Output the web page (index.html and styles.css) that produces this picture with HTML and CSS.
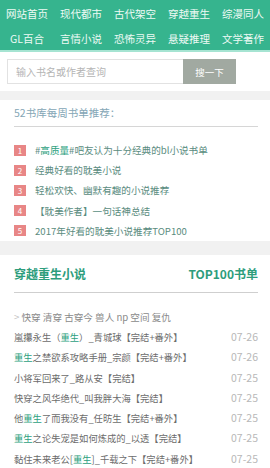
FILE: index.html
```
<!DOCTYPE html>
<html lang="zh-CN">
<head>
    <meta charset="UTF-8">
    <meta name="viewport" content="width=device-width, initial-scale=1.0">
    <title>52书库</title>
    <link rel="stylesheet" href="styles.css">
</head>
<body>
    <div class="nav">
        <a href="#">网站首页</a>
        <a href="#">现代都市</a>
        <a href="#">古代架空</a>
        <a href="#">穿越重生</a>
        <a href="#">综漫同人</a>
        <a href="#">GL百合</a>
        <a href="#">言情小说</a>
        <a href="#">恐怖灵异</a>
        <a href="#">悬疑推理</a>
        <a href="#">文学著作</a>
    </div>

    <div class="search">
        <input type="text" placeholder="输入书名或作者查询">
        <button>搜一下</button>
    </div>

    <div class="gap"></div>

    <div class="card">
        <h3 class="week-title">52书库每周书单推荐：</h3>
        <ul class="rank">
            <li><span class="num">1</span>#<em>高质量</em>#吧友认为十分经典的bl小说书单</li>
            <li><span class="num">2</span>经典好看的耽美小说</li>
            <li><span class="num">3</span>轻松欢快、幽默有趣的小说推荐</li>
            <li><span class="num">4</span>【耽美作者】一句话神总结</li>
            <li><span class="num">5</span>2017年好看的耽美小说推荐TOP100</li>
        </ul>
    </div>

    <div class="gap gap-lg"></div>

    <div class="card">
        <div class="sec-head">
            <h3>穿越重生小说</h3>
            <a href="#">TOP100书单</a>
        </div>
        <p class="tags"><span class="arrow">&gt;</span> 快穿 清穿 古穿今 兽人 np 空间 复仇</p>
        <ul class="books">
            <li><span class="name">嵐攥永生（<em>重生</em>）_青城球【完结+番外】</span><span class="date">07-26</span></li>
            <li><span class="name"><em>重生</em>之禁欲系攻略手册_宗颜【完结+番外】</span><span class="date">07-26</span></li>
            <li><span class="name">小将军回来了_路从安【完结】</span><span class="date">07-25</span></li>
            <li><span class="name">快穿之风华绝代_叫我胖大海【完结】</span><span class="date">07-25</span></li>
            <li><span class="name">他<em>重生</em>了而我没有_任昉生【完结+番外】</span><span class="date">07-25</span></li>
            <li><span class="name"><em>重生</em>之论失宠是如何炼成的_以透【完结】</span><span class="date">07-25</span></li>
            <li><span class="name">黏住未来老公[<em>重生</em>]_千载之下【完结+番外】</span><span class="date">07-25</span></li>
        </ul>
    </div>
</body>
</html>
```

FILE: styles.css
```
body {
    margin: 0;
    font-family: "Noto Sans CJK SC", "Noto Sans", sans-serif;
    background: #fff;
    color: #666;
}
ul {
    list-style: none;
    margin: 0;
    padding: 0;
}
em {
    font-style: normal;
}
.nav {
    background: #36b48e;
    display: grid;
    grid-template-columns: repeat(5, 1fr);
    grid-auto-rows: 25px;
    padding: 1px 0 0;
    height: 49px;
    border-bottom: 2px solid #a6e4d2;
}
.nav a {
    color: #eefaf5;
    text-decoration: none;
    font-size: 10.5px;
    line-height: 25px;
    text-align: center;
}
.search {
    display: flex;
    padding: 7px 34px 7px 7px;
}
.search input {
    flex: 1;
    height: 25px;
    box-sizing: border-box;
    border: 1px solid #e2e2e2;
    border-right: none;
    padding: 0 8px;
    font-family: inherit;
    font-size: 10px;
    outline: none;
}
.search input::placeholder {
    color: #b5b5b5;
}
.search button {
    width: 53px;
    height: 25px;
    border: none;
    background: #a1a9a1;
    color: #fff;
    font-family: inherit;
    font-size: 9.5px;
}
.gap {
    height: 9px;
    background: #f1f1f1;
}
.gap-lg {
    height: 14px;
}
.card {
    padding: 0 12px 0 14px;
}
.week-title {
    margin: 0;
    font-weight: normal;
    font-size: 10.5px;
    line-height: 26px;
    color: #84a6b6;
    border-bottom: 1px solid #d6d6d6;
}
.rank {
    padding: 13px 0 0;
}
.rank li {
    display: flex;
    align-items: center;
    height: 20.2px;
    font-size: 9.6px;
    color: #5a8c80;
}
.rank em {
    color: #2d9f7e;
}
.rank .num {
    width: 12px;
    height: 11px;
    line-height: 11px;
    margin-right: 9px;
    background: #e88686;
    color: #fff;
    font-size: 8px;
    text-align: center;
}
.sec-head {
    display: flex;
    justify-content: space-between;
    align-items: center;
    height: 37px;
    border-bottom: 1px solid #cfcfcf;
}
.sec-head h3 {
    margin: 0;
    font-size: 12px;
    color: #2d9d7c;
}
.sec-head a {
    font-size: 12px;
    font-weight: bold;
    color: #2d9d7c;
    text-decoration: none;
}
.tags {
    margin: 14px 0 0;
    font-size: 9.6px;
    line-height: 20px;
    color: #8a8a8a;
}
.tags .arrow {
    color: #c4c4c4;
}
.books li {
    display: flex;
    justify-content: space-between;
    height: 20.3px;
    line-height: 20.3px;
    font-size: 9.3px;
}
.books .name {
    color: #6c6c6c;
}
.books em {
    color: #2d9f7e;
}
.books .date {
    color: #b8b8b8;
    font-size: 10.5px;
}
```
